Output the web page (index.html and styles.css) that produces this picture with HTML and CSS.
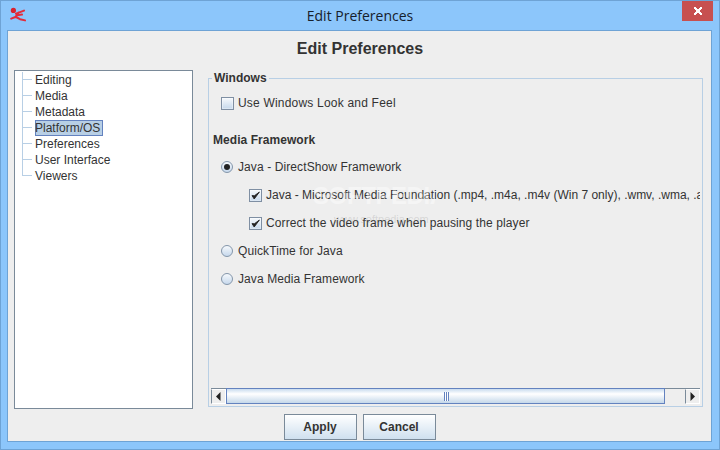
FILE: index.html
```html
<!DOCTYPE html>
<html lang="en">
<head>
<meta charset="utf-8">
<title>Edit Preferences</title>
<link rel="stylesheet" href="styles.css">
</head>
<body>
<div class="window">
  <header class="titlebar">
    <svg class="app-icon" width="16" height="16" viewBox="0 0 16 16">
      <circle cx="3.4" cy="3.4" r="2.6" fill="#d9232e"/>
      <path d="M6 6.6 14 3.6M8.4 5.6 5.4 10 1.2 11.6M7 8.2 12 7.6M6 10 10 12.2 15 13.4" fill="none" stroke="#e32b3a" stroke-width="2" stroke-linecap="round" stroke-linejoin="round"/>
    </svg>
    <span class="title-text">Edit Preferences</span>
    <button class="close-btn" type="button" aria-label="Close">
      <svg width="10" height="10" viewBox="0 0 10 10"><path d="M1 1h2v1h1v1h2V2h1V1h2v2H8v1H7v2h1v1h1v2H7V8H6V7H4v1H3v1H1V7h1V6h1V4H2V3H1z" fill="#fff"/></svg>
    </button>
  </header>
  <main class="content">
    <h1 class="heading">Edit Preferences</h1>
    <div class="panes">
      <ul class="tree">
        <li class="tree-row"><span class="branch"></span><span class="tree-label">Editing</span></li>
        <li class="tree-row"><span class="branch"></span><span class="tree-label">Media</span></li>
        <li class="tree-row"><span class="branch"></span><span class="tree-label">Metadata</span></li>
        <li class="tree-row"><span class="branch"></span><span class="tree-label selected">Platform/OS</span></li>
        <li class="tree-row"><span class="branch"></span><span class="tree-label">Preferences</span></li>
        <li class="tree-row"><span class="branch"></span><span class="tree-label">User Interface</span></li>
        <li class="tree-row"><span class="branch last"></span><span class="tree-label">Viewers</span></li>
      </ul>
      <fieldset class="group">
        <legend class="legend">Windows</legend>
        <div class="scroll-view">
          <div class="opt wide"><span class="check"></span>Use Windows Look and Feel</div>
          <div class="section">Media Framework</div>
          <div class="opt slight"><span class="radio on"></span>Java - DirectShow Framework</div>
          <div class="opt sub"><span class="check">
            <svg width="9" height="9" viewBox="0 0 9 9"><path d="M1 4.6 3.2 8 8.4 1 3.4 4.8z" fill="#222" stroke="#222" stroke-width=".9"/></svg>
          </span>Java - Microsoft Media Foundation (.mp4, .m4a, .m4v (Win 7 only), .wmv, .wma, .asf)</div>
          <div class="opt sub slight"><span class="check">
            <svg width="9" height="9" viewBox="0 0 9 9"><path d="M1 4.6 3.2 8 8.4 1 3.4 4.8z" fill="#222" stroke="#222" stroke-width=".9"/></svg>
          </span>Correct the video frame when pausing the player</div>
          <div class="opt slight"><span class="radio"></span>QuickTime for Java</div>
          <div class="opt slight"><span class="radio"></span>Java Media Framework</div>
        </div>
        <div class="scrollbar">
          <span class="arrow"><svg width="5" height="9" viewBox="0 0 5 9"><path d="M4.5 0v9L0 4.5z" fill="#222"/></svg></span>
          <span class="thumb"><span class="grip"></span></span>
          <span class="track"></span>
          <span class="arrow"><svg width="5" height="9" viewBox="0 0 5 9"><path d="M.5 0v9L5 4.5z" fill="#222"/></svg></span>
        </div>
      </fieldset>
    </div>
    <div class="actions">
      <button class="btn" type="button">Apply</button>
      <button class="btn" type="button">Cancel</button>
    </div>
    <div class="wm-big">SOFTPEDIA</div>
    <div class="wm-small">www.softpedia.com</div>
  </main>
</div>
</body>
</html>
```
FILE: styles.css
```css
* { box-sizing: border-box; }
html, body { margin: 0; padding: 0; }
body { width: 720px; height: 450px; overflow: hidden; font-family: "Liberation Sans", Arial, sans-serif; font-size: 12px; color: #333; }
.window { width: 720px; height: 450px; display: flex; flex-direction: column; background: #8cc6fb; border: 1px solid #6ea3d5; }
.titlebar { height: 29px; flex: none; display: flex; align-items: flex-start; position: relative; }
.app-icon { margin: 6px 0 0 9px; }
.title-text { position: absolute; left: 0; right: 0; top: 6px; text-align: center; font-family: "Open Sans", sans-serif; font-size: 14px; line-height: 18px; color: #16202b; }
.close-btn { position: absolute; right: 6px; top: 0; width: 31px; height: 20px; padding: 0; border: 0; background: #c75050; display: flex; align-items: center; justify-content: center; }
.content { position: relative; flex: 1; margin: 0 7px 7px 6px; background: #eeeeee; border: 1px solid #6ea3d5; display: flex; flex-direction: column; padding: 0 8px 0 6px; }
.heading { margin: 0; height: 39px; padding: 8px 0 0 3px; flex: none; text-align: center; font-size: 16px; line-height: 20px; font-weight: bold; color: #333; }
.panes { display: flex; height: 339px; flex: none; gap: 15px; }
.tree { width: 179px; flex: none; margin: 0; padding: 1px 0 0; list-style: none; background: #fff; border: 1px solid #7a8a99; }
.tree-row { display: flex; height: 16px; align-items: stretch; color: #333; line-height: 16px; }
.branch { width: 10px; margin: 0 3px 0 7px; flex: none; border-left: 1px solid #b8cfe5; background: linear-gradient(#b8cfe5, #b8cfe5) no-repeat 0 7px / 100% 1px; }
.branch.last { border-left: 0; background: linear-gradient(#b8cfe5, #b8cfe5) no-repeat 0 0 / 1px 8px, linear-gradient(#b8cfe5, #b8cfe5) no-repeat 0 7px / 100% 1px; }
.tree-label { padding: 0 1px 0 0; line-height: 16px; }
.selected { padding-right: 3px; background: #b8cfe5; box-shadow: inset 0 0 0 1px #6382bf; }
.group { flex: 1; min-width: 0; margin: 1px 0 2px; padding: 0 2px 2px; border: 1px solid #b8cfe5; display: flex; flex-direction: column; }
.legend { margin-left: 1px; padding: 0 2px; font-weight: bold; font-size: 12px; line-height: 14px; color: #333; }
.scroll-view { flex: 1; min-height: 0; overflow: hidden; padding: 4px 0 0 10px; }
.opt { height: 28px; display: flex; align-items: center; white-space: nowrap; }
.wide { letter-spacing: .2px; }
.slight { letter-spacing: .1px; }
.sub { padding-left: 28px; }
.section { height: 26px; margin: 10px 0 0 -8px; line-height: 26px; font-weight: bold; letter-spacing: .05px; }
.check { flex: none; width: 13px; height: 13px; margin-right: 4px; border: 1px solid #7f8fa3; box-shadow: inset 0 0 0 1px rgba(255,255,255,.35); background: linear-gradient(#f6f9fc, #c6d8ec); display: flex; align-items: center; justify-content: center; }
.radio { flex: none; width: 12px; height: 12px; margin-right: 5px; border: 1px solid #8496aa; border-radius: 50%; background: linear-gradient(#f6f9fc, #c6d8ec); position: relative; }
.radio.on::after { content: ""; position: absolute; left: 2px; top: 2px; width: 6px; height: 6px; border-radius: 50%; background: #222; }
.scrollbar { flex: none; height: 16px; display: flex; border-top: 1px solid #7a8a99; }
.arrow { width: 15px; flex: none; display: flex; align-items: center; justify-content: center; background: #eee; border: 1px solid #fff; border-left-color: #7a8a99; }
.thumb { width: 439px; flex: none; display: flex; align-items: center; justify-content: center; border: 1px solid #6382bf; background: linear-gradient(#c9dcef, #fff 35%, #c5d8ea); margin-top: -1px; height: 16px; }
.grip { width: 5px; height: 9px; margin-left: 1px; background: repeating-linear-gradient(90deg, #6382bf 0 1px, #fff 1px 2px); }
.track { flex: 1; background: #eee; }
.actions { flex: 1; display: flex; justify-content: center; gap: 6px; padding: 5px 0 0 2px; }
.btn { width: 73px; height: 26px; padding: 0; border: 1px solid #7a8a99; background: linear-gradient(#fff, #cfe0ef); font-family: "Liberation Sans", Arial, sans-serif; font-size: 12px; font-weight: bold; color: #333; }
.wm-big { position: absolute; left: 305px; top: 153px; width: 122px; overflow: hidden; white-space: nowrap; font-size: 24px; line-height: 24px; font-weight: bold; letter-spacing: -.4px; color: rgba(255,255,255,.45); pointer-events: none; }
.wm-small { position: absolute; left: 326px; top: 183px; font-size: 11px; line-height: 11px; color: rgba(150,150,150,.28); pointer-events: none; }
```
